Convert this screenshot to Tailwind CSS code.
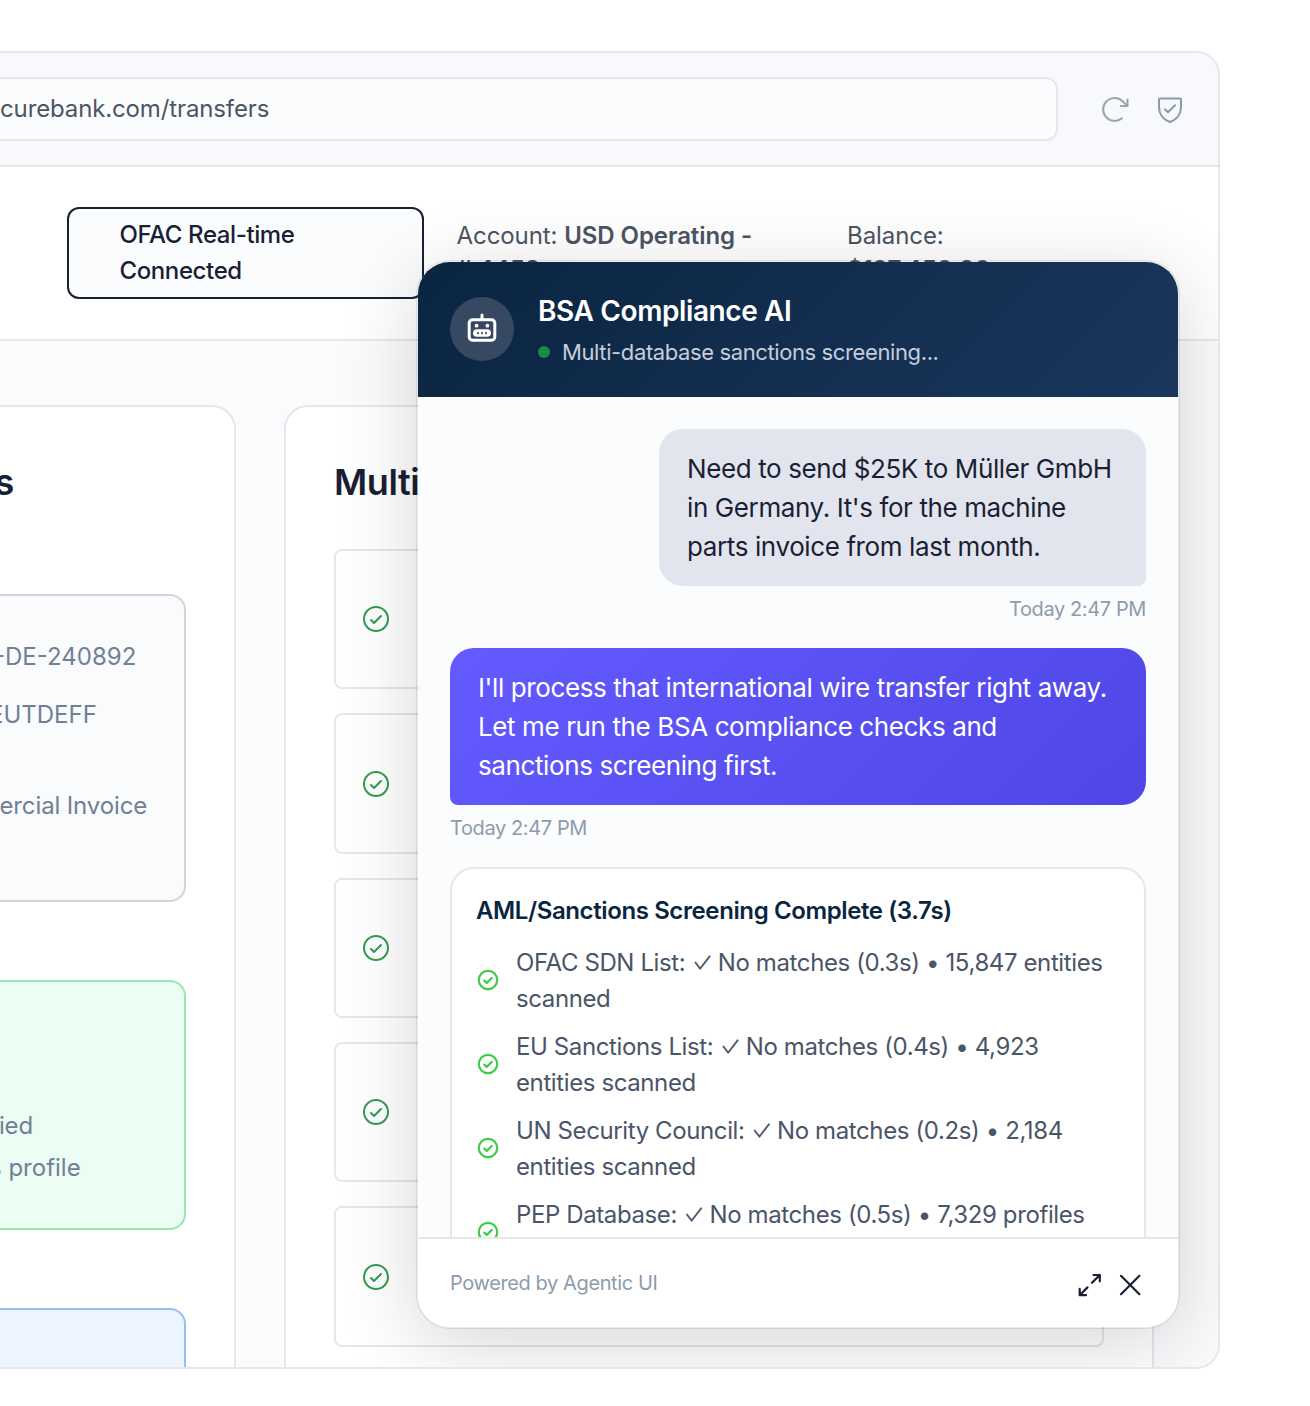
<!DOCTYPE html>
<html lang="en">
<head>
<meta charset="utf-8">
<title>SecureBank transfers</title>
<script src="https://cdn.jsdelivr.net/npm/@tailwindcss/browser@4"></script>
</head>
<body class="h-[1406px] w-[1310px] overflow-hidden bg-white font-['Inter',sans-serif] text-[24px] leading-9 text-[#4b5563] antialiased">
<svg class="hidden">
  <symbol id="check-circle" viewBox="0 0 256 256"><path fill="currentColor" d="M173.66 98.34a8 8 0 0 1 0 11.32l-56 56a8 8 0 0 1-11.32 0l-24-24a8 8 0 0 1 11.32-11.32L112 148.69l50.34-50.35a8 8 0 0 1 11.32 0ZM232 128A104 104 0 1 1 128 24a104.11 104.11 0 0 1 104 104Zm-16 0a88 88 0 1 0-88 88 88.1 88.1 0 0 0 88-88Z"/></symbol>
</svg>
<div class="relative mt-[51px] -ml-10 flex h-[1318px] w-[1260px] flex-col overflow-hidden rounded-[24px] border-2 border-[#e5e7eb] bg-white">
  <div class="flex h-[114px] shrink-0 items-center border-b-2 border-[#e5e7eb] bg-[#f8f9fd]">
    <div class="flex h-16 w-[1096px] shrink-0 items-center rounded-[12px] border-2 border-[#e5e7eb] bg-[#fbfcfe] pl-9 tracking-[-0.13px]"><span>curebank.com/transfers</span></div>
    <svg class="mt-px ml-[40.5px] size-8 shrink-0" viewBox="0 0 32 32" fill="none" stroke="#9ca3af" stroke-width="2" stroke-linecap="round" stroke-linejoin="round"><path d="M22.8 24.4A11.5 11.5 0 1 1 24.5 8.1L28 11.5"/><path d="M21.8 12H28.5V5.5"/></svg>
    <svg class="mt-0.5 ml-[23.5px] size-8 shrink-0" viewBox="0 0 256 256" fill="none" stroke="#8b9bad" stroke-width="16" stroke-linecap="round" stroke-linejoin="round"><path d="M40 114.8V56a8 8 0 0 1 8-8h160a8 8 0 0 1 8 8v58.8c0 81-62 112.100-88 121.100-26-9-88-40.100-88-121.100Z" transform="translate(0 -12)"/><path d="M88 126l24 24 56-56" transform="translate(0 -4)"/></svg>
  </div>
  <div class="flex h-[174px] shrink-0 items-start border-b-2 border-[#e5e7eb] pt-10 pl-[105px] leading-[33.6px]">
    <div class="h-[92px] w-[357px] rounded-[12px] border-2 border-[#1a1f36] bg-[#fbfcfe] px-[50.5px] py-2 leading-9 font-medium tracking-[-0.39px] text-[#1a1f36]">OFAC Real-time<br>Connected</div>
    <div class="ml-[32.500px] w-[390.500px] pt-3 tracking-[-0.07px]">Account: <b class="font-semibold">USD Operating -<br># 4458</b></div>
    <div class="pt-3 tracking-[-0.07px]">Balance:<br><b class="font-semibold">$127,450.00</b></div>
  </div>
  <div class="flex flex-1 gap-12 overflow-hidden bg-[#fafbfd] pt-16">
    <section class="h-[1100px] w-[274px] shrink-0 rounded-tr-[24px] border-2 border-l-0 border-[#e5e7eb] bg-white pr-12 text-[#718096]">
      <h2 class="mt-[48px] h-[139px] pl-[32.500px] text-[36px] leading-[54px] font-semibold text-[#1a1f36]">s</h2>
      <div class="h-[308px] rounded-r-[16px] border-2 border-[#d1d5db] bg-[#fafbfd] pt-[43px] pl-[30px]">
        <p class="h-[58px]">-DE-240892</p>
        <p class="h-[91px]"><span class="-ml-[5px]">EUTDEFF</span></p>
        <p class="pl-[5.500px] tracking-[-0.13px]">ercial Invoice</p>
      </div>
      <div class="mt-[78px] h-[250px] rounded-r-[16px] border-2 border-[#95e9ae] bg-[#ecfdf3] pt-[126px] pl-9">
        <p class="-ml-px h-[42px] tracking-[-0.2px]">ied</p>
        <p><span class="-ml-[11px]">s profile</span></p>
      </div>
      <div class="mt-[78px] h-[200px] rounded-tr-[16px] border-2 border-[#93bff3] bg-[#ebf4ff]"></div>
    </section>
    <section class="h-[1100px] w-[870px] shrink-0 rounded-t-[24px] border-2 border-[#e5e7eb] bg-white px-12">
      <h2 class="mt-[48px] h-[94px] text-[36px] leading-[54px] font-semibold tracking-[-0.4px] text-[#1a1f36]">Multi</h2>
      <div class="flex flex-col gap-6 text-[#2f9e50]">
        <div class="flex h-[140.4px] shrink-0 items-center rounded-[8px] border-2 border-[#e5e7eb] pl-6"><svg class="size-8"><use href="#check-circle"/></svg></div>
        <div class="flex h-[140.4px] shrink-0 items-center rounded-[8px] border-2 border-[#e5e7eb] pl-6"><svg class="size-8"><use href="#check-circle"/></svg></div>
        <div class="flex h-[140.4px] shrink-0 items-center rounded-[8px] border-2 border-[#e5e7eb] pl-6"><svg class="size-8"><use href="#check-circle"/></svg></div>
        <div class="flex h-[140.2px] shrink-0 items-center rounded-[8px] border-2 border-[#e5e7eb] pl-6"><svg class="size-8"><use href="#check-circle"/></svg></div>
        <div class="flex h-[141px] shrink-0 items-center rounded-[8px] border-2 border-[#e5e7eb] pl-6"><svg class="size-8"><use href="#check-circle"/></svg></div>
      </div>
    </section>
  </div>

  <!-- chat widget -->
  <div class="absolute top-[207px] right-[38px] flex h-[1069px] w-[764px] flex-col overflow-hidden rounded-[34px] border-2 border-black/8 bg-[#fbfcfe] bg-clip-padding tracking-[-0.39px] shadow-[0_16px_80px_rgba(0,0,0,0.16)]">
    <header class="flex h-[135px] shrink-0 items-center bg-linear-135 from-[#0a2540] to-[#1a365d] px-8">
      <div class="-mt-px flex size-16 items-center justify-center rounded-full bg-[#374962]">
        <svg class="size-8" viewBox="0 0 32 32" fill="none"><rect x="3.2" y="6.8" width="25.6" height="20.4" rx="3.2" stroke="#fff" stroke-width="3"/><path d="M16 2v4" stroke="#fff" stroke-width="3" stroke-linecap="round"/><rect x="7" y="16.200" width="18" height="7.600" rx="3.800" fill="#fff"/><path d="M12 19.500v1M16 19.500v1M20 19.500v1" stroke="#374962" stroke-width="1.700" stroke-linecap="round"/><circle cx="10.600" cy="12.700" r="1.900" fill="#fff"/><circle cx="21.400" cy="12.700" r="1.900" fill="#fff"/></svg>
      </div>
      <div class="ml-6">
        <h1 class="text-[28px] leading-[42px] font-semibold text-white">BSA Compliance AI</h1>
        <p class="mt-1 flex items-center gap-3 text-[22px] leading-[33px] text-[#c5cedb]"><span class="-mt-0.5 size-3 rounded-full bg-[#1f8a43]"></span>Multi-database sanctions screening...</p>
      </div>
    </header>
    <div class="flex flex-1 flex-col overflow-hidden px-8 pt-8 text-[26px] leading-[39px]">
      <div class="w-[487px] shrink-0 self-end rounded-[24px] rounded-br-[8px] bg-[#e2e5ed] px-7 py-5 whitespace-nowrap text-[#1a1f36]">Need to send $25K to Müller GmbH<br>in Germany. It's for the machine<br>parts invoice from last month.</div>
      <p class="mt-2 mb-6 self-end text-[20px] leading-[30px] text-[#8e9bab]">Today 2:47 PM</p>
      <div class="shrink-0 rounded-[24px] rounded-bl-[8px] bg-linear-135 from-[#635bff] to-[#4f46e5] px-7 py-5 whitespace-nowrap text-white">I'll process that international wire transfer right away.<br>Let me run the BSA compliance checks and<br>sanctions screening first.</div>
      <p class="mt-2 mb-6 text-[20px] leading-[30px] text-[#8e9bab]">Today 2:47 PM</p>
      <div class="h-[500px] shrink-0 rounded-[24px] border-2 border-[#e5e7eb] bg-white p-6 text-[24px] leading-9 text-[#4a5568]">
        <h3 class="mb-4 font-semibold text-[#0a2540]">AML/Sanctions Screening Complete (3.7s)</h3>
        <ul class="flex flex-col gap-3 whitespace-nowrap">
          <li class="flex items-center gap-4"><svg class="-mt-0.5 size-6 shrink-0 text-[#3fcb48]" viewBox="0 0 24 24" fill="none" stroke="currentColor" stroke-width="2.2" stroke-linecap="round" stroke-linejoin="round"><circle cx="12" cy="12" r="9.2"/><path d="M8.3 12.6l2.4 2.3 5-4.9"/></svg><span>OFAC SDN List: <span class="-mr-px inline-block scale-y-130 font-light">✓</span> No matches (0.3s) • 15,847 entities<br>scanned</span></li>
          <li class="flex items-center gap-4"><svg class="-mt-0.5 size-6 shrink-0 text-[#3fcb48]" viewBox="0 0 24 24" fill="none" stroke="currentColor" stroke-width="2.2" stroke-linecap="round" stroke-linejoin="round"><circle cx="12" cy="12" r="9.2"/><path d="M8.3 12.6l2.4 2.3 5-4.9"/></svg><span>EU Sanctions List: <span class="-mr-px inline-block scale-y-130 font-light">✓</span> No matches (0.4s) • 4,923<br>entities scanned</span></li>
          <li class="flex items-center gap-4"><svg class="-mt-0.5 size-6 shrink-0 text-[#3fcb48]" viewBox="0 0 24 24" fill="none" stroke="currentColor" stroke-width="2.2" stroke-linecap="round" stroke-linejoin="round"><circle cx="12" cy="12" r="9.2"/><path d="M8.3 12.6l2.4 2.3 5-4.9"/></svg><span>UN Security Council: <span class="-mr-px inline-block scale-y-130 font-light">✓</span> No matches (0.2s) • 2,184<br>entities scanned</span></li>
          <li class="flex items-center gap-4"><svg class="-mt-0.5 size-6 shrink-0 text-[#3fcb48]" viewBox="0 0 24 24" fill="none" stroke="currentColor" stroke-width="2.2" stroke-linecap="round" stroke-linejoin="round"><circle cx="12" cy="12" r="9.2"/><path d="M8.3 12.6l2.4 2.3 5-4.9"/></svg><span>PEP Database: <span class="-mr-px inline-block scale-y-130 font-light">✓</span> No matches (0.5s) • 7,329 profiles<br>scanned</span></li>
        </ul>
      </div>
    </div>
    <footer class="flex h-[90px] shrink-0 items-center border-t-2 border-[#e5e7eb] bg-white px-8 text-[20px] text-[#8e9bab]">
      <span class="flex-1">Powered by Agentic UI</span>
      <svg class="mt-1 mr-2 size-8" viewBox="0 0 32 32" fill="none" stroke="#1a1f36" stroke-width="2.200" stroke-linecap="round" stroke-linejoin="round"><path d="M19.500 6H25.800V12.300M25.800 6L18 13.800M12 26.200H5.700V19.900M5.700 26.200L13.500 18.400"/></svg>
      <svg class="mt-1 size-8" viewBox="0 0 32 32" fill="none" stroke="#1a1f36" stroke-width="2.200" stroke-linecap="round"><path d="M7 6.800l18.400 18.400M25.400 6.800l-18.400 18.400"/></svg>
    </footer>
  </div>
</div>
</body>
</html>
